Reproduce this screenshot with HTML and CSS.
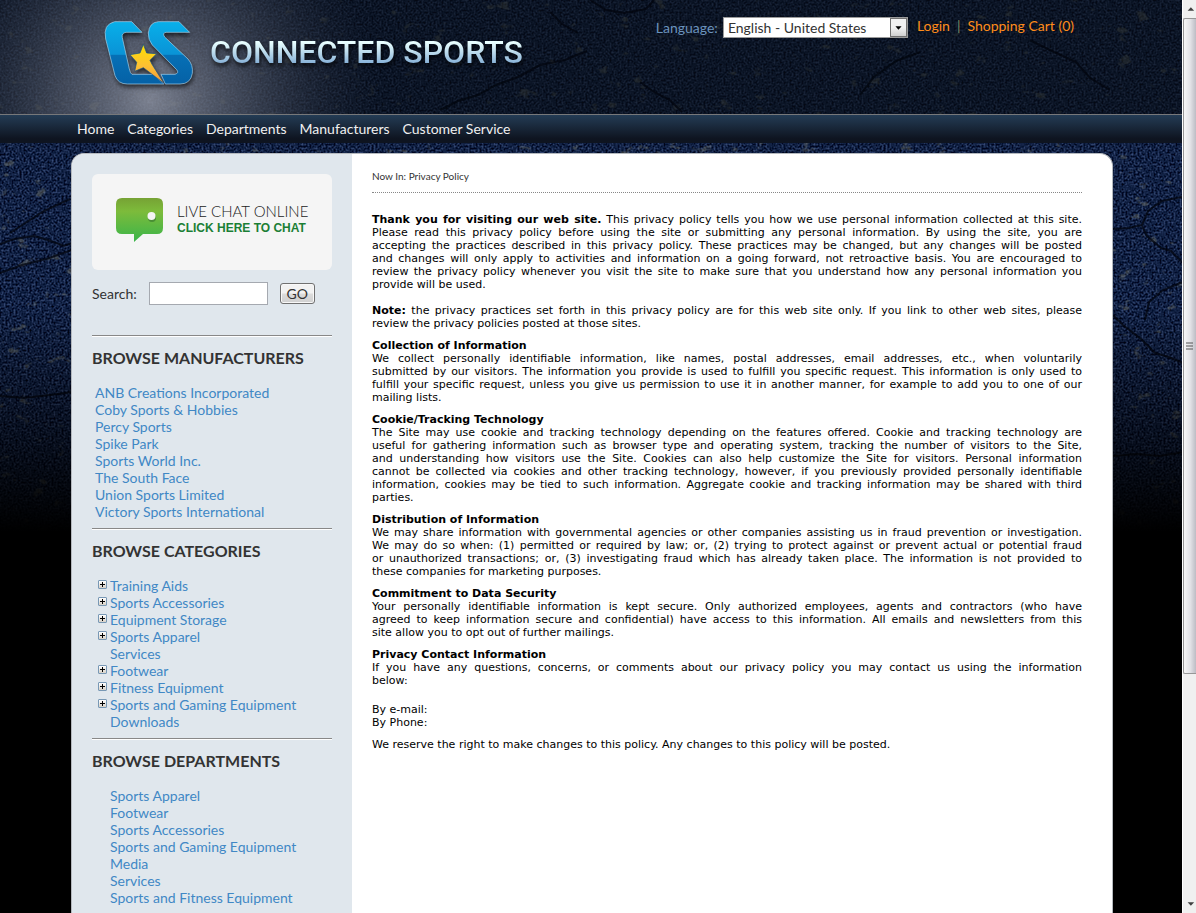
FILE: index.html
```html
<!DOCTYPE html>
<html lang="en">
<head>
    <meta charset="UTF-8">
    <meta name="viewport" content="width=device-width, initial-scale=1.0">
    <title>Privacy Policy - Connected Sports</title>
    <link rel="stylesheet" href="styles.css">
</head>
<body>
    <div class="page">
        <!-- asphalt texture behind everything -->
        <svg class="texture" aria-hidden="true" width="100%" height="560">
            <defs>
                <filter id="grain" x="0" y="0" width="100%" height="100%" color-interpolation-filters="sRGB">
                    <feTurbulence type="fractalNoise" baseFrequency="0.5" numOctaves="3" seed="4"/>
                    <feColorMatrix values="0.6 0 0 0 -0.23  0.65 0 0 0 -0.19  0.8 0 0 0 -0.13  0 0 0 0 1"/>
                </filter>
                <filter id="patches" x="0" y="0" width="100%" height="100%" color-interpolation-filters="sRGB">
                    <feTurbulence type="fractalNoise" baseFrequency="0.06 0.09" numOctaves="3" seed="11"/>
                    <feColorMatrix values="0 0 0 0 0.5  0 0 0 0 0.5  0 0 0 0 0.42  0 9 0 0 -6.2"/>
                </filter>
                <linearGradient id="fade" x1="0" y1="0" x2="0" y2="1">
                    <stop offset="0.55" stop-color="#000" stop-opacity="0"/>
                    <stop offset="0.8" stop-color="#000" stop-opacity="0.6"/>
                    <stop offset="0.95" stop-color="#000"/>
                </linearGradient>
                <radialGradient id="spot" gradientUnits="userSpaceOnUse" cx="150" cy="100" r="230">
                    <stop offset="0" stop-color="#b0b4c2" stop-opacity="0.68"/>
                    <stop offset="0.4" stop-color="#858b9b" stop-opacity="0.42"/>
                    <stop offset="1" stop-color="#3a4152" stop-opacity="0"/>
                </radialGradient>
            </defs>
            <rect width="100%" height="560" fill="#0d1b3c"/>
            <rect width="100%" height="560" filter="url(#grain)" opacity="0.85"/>
            <rect width="100%" height="560" filter="url(#patches)" opacity="0.4"/>
            <rect width="100%" height="114" fill="#080d12" opacity="0.6"/>
            <rect width="100%" height="114" fill="url(#spot)"/>
            <g class="cracks">
                <path d="M440 110l18-9 20-6 18-10 22-8 22-12 25-5 22-9"/>
                <path d="M550 12l12 12 16 9M590 0l16 10 18 3 22-4 8-9"/>
                <path d="M640 82l14 10 16 8 12 12M860 95l14-18 22-16 24-9"/>
                <path d="M1030 40l24 12 22 10 14 16 20 12"/>
                <path d="M0 244l14-5 20-3 14 4 16 6 8-3M0 273l22-8 24-6 26-9"/>
                <path d="M0 396l24 2 26-3 22-3M10 233l34-22 26-12"/>
                <path d="M1113 229l16-1 13-3 6-14 14-10 20-4"/>
                <path d="M1142 226l5 10 14 12 10 3 12 12"/>
                <path d="M1113 315l10 10 18 14 14 14 14 4 14 6M1145 320l4-18 14-12 20-8"/>
                <path d="M1113 456l24-2 22 2 24-4"/>
            </g>
            <rect width="100%" height="560" fill="url(#fade)"/>
        </svg>

        <header class="header">
            <div class="container header-row">
                <a href="#" class="logo">
                    <svg class="logo-mark" viewBox="36 56 282 216" aria-hidden="true">
                        <defs>
                            <linearGradient id="blue" gradientUnits="userSpaceOnUse" x1="0" y1="63" x2="0" y2="250">
                                <stop offset="0" stop-color="#08b0ea"/>
                                <stop offset="0.53" stop-color="#0a93d6"/>
                                <stop offset="0.54" stop-color="#0670b6"/>
                                <stop offset="1" stop-color="#0561a6"/>
                            </linearGradient>
                            <linearGradient id="gold" x1="0" y1="0" x2="0" y2="1">
                                <stop offset="0" stop-color="#ffe100"/>
                                <stop offset="0.55" stop-color="#fdc033"/>
                                <stop offset="1" stop-color="#f39a3b"/>
                            </linearGradient>
                        </defs>
                        <g fill="url(#blue)" stroke="#a9d4ee" stroke-width="2">
                            <path d="M74 64H125L156 96H108Q94 98 97 112L118 206Q121 220 126 222H190L222 251H112Q84 251 75 226L47 116Q38 72 74 64Z"/>
                            <path d="M205 64H267L299 96H228Q216 98 224 110L294 176Q310 194 307 219Q302 251 270 251H226L213 222H255Q268 218 260 208L187 134Q174 118 175 98Q178 66 205 64Z"/>
                        </g>
                        <path fill="url(#gold)" stroke="#11508a" stroke-width="2" d="M160 132L170 158L200 160L180 180L186 192L222 249L160 202L134 213L140 186L120 163L150 158Z"/>
                    </svg>
                    <span class="logo-text">CONNECTED SPORTS</span>
                </a>
                <div class="tools">
                    <label for="language">Language:</label>
                    <div class="select-box">
                        <select id="language">
                            <option>English - United States</option>
                        </select>
                        <svg class="select-arrow" viewBox="0 0 17 19" aria-hidden="true"><path d="M5 8h7l-3.5 4z"/></svg>
                    </div>
                    <div class="account">
                        <a href="#">Login</a>
                        <span class="divider">|</span>
                        <a href="#">Shopping Cart (0)</a>
                    </div>
                </div>
            </div>
        </header>

        <nav class="nav">
            <div class="container nav-row">
                <a href="#">Home</a>
                <a href="#">Categories</a>
                <a href="#">Departments</a>
                <a href="#">Manufacturers</a>
                <a href="#">Customer Service</a>
            </div>
        </nav>

        <div class="container wrapper">
            <aside class="sidebar">
                <a href="#" class="chat">
                    <svg class="chat-icon" width="48" height="44" viewBox="0 0 48 44" aria-hidden="true">
                        <defs>
                            <linearGradient id="green" x1="0" y1="0" x2="0" y2="1">
                                <stop offset="0" stop-color="#76a234"/>
                                <stop offset="0.3" stop-color="#7dbb3b"/>
                                <stop offset="1" stop-color="#39b54a"/>
                            </linearGradient>
                        </defs>
                        <path fill="url(#green)" d="M6 0H41Q47 0 47 6V30Q47 36 41 36H27L18 44V36H6Q0 36 0 30V6Q0 0 6 0Z"/>
                        <circle cx="36" cy="20" r="4" fill="#4a8f35"/>
                        <circle cx="35.500" cy="18" r="4" fill="#f4f4f4"/>
                    </svg>
                    <span class="chat-text">
                        <span class="chat-title">LIVE CHAT ONLINE</span>
                        <strong>CLICK HERE TO CHAT</strong>
                    </span>
                </a>
                <form class="search">
                    <label for="search">Search:</label>
                    <input type="text" id="search">
                    <button type="button">GO</button>
                </form>

                <section class="block">
                    <h2>BROWSE MANUFACTURERS</h2>
                    <ul class="links">
                        <li><a href="#">ANB Creations Incorporated</a></li>
                        <li><a href="#">Coby Sports &amp; Hobbies</a></li>
                        <li><a href="#">Percy Sports</a></li>
                        <li><a href="#">Spike Park</a></li>
                        <li><a href="#">Sports World Inc.</a></li>
                        <li><a href="#">The South Face</a></li>
                        <li><a href="#">Union Sports Limited</a></li>
                        <li><a href="#">Victory Sports International</a></li>
                    </ul>
                </section>

                <section class="block">
                    <h2>BROWSE CATEGORIES</h2>
                    <ul class="links tree">
                        <li class="expand"><a href="#">Training Aids</a></li>
                        <li class="expand"><a href="#">Sports Accessories</a></li>
                        <li class="expand"><a href="#">Equipment Storage</a></li>
                        <li class="expand"><a href="#">Sports Apparel</a></li>
                        <li><a href="#">Services</a></li>
                        <li class="expand"><a href="#">Footwear</a></li>
                        <li class="expand"><a href="#">Fitness Equipment</a></li>
                        <li class="expand"><a href="#">Sports and Gaming Equipment</a></li>
                        <li><a href="#">Downloads</a></li>
                    </ul>
                </section>

                <section class="block">
                    <h2>BROWSE DEPARTMENTS</h2>
                    <ul class="links tree">
                        <li><a href="#">Sports Apparel</a></li>
                        <li><a href="#">Footwear</a></li>
                        <li><a href="#">Sports Accessories</a></li>
                        <li><a href="#">Sports and Gaming Equipment</a></li>
                        <li><a href="#">Media</a></li>
                        <li><a href="#">Services</a></li>
                        <li><a href="#">Sports and Fitness Equipment</a></li>
                    </ul>
                </section>
            </aside>

            <main class="content">
                <div class="breadcrumb">Now In: <a href="#">Privacy Policy</a></div>
                <div class="policy">
                    <p class="intro"><b>Thank you for visiting our web site.</b> This privacy policy tells you how we use personal information collected at this site.<br>
                    Please read this privacy policy before using the site or submitting any personal information. By using the site, you are<br>
                    accepting the practices described in this privacy policy. These practices may be changed, but any changes will be posted<br>
                    and changes will only apply to activities and information on a going forward, not retroactive basis. You are encouraged to<br>
                    review the privacy policy whenever you visit the site to make sure that you understand how any personal information you
                    <span class="last">provide will be used.</span></p>
                    <p><b>Note:</b> the privacy practices set forth in this privacy policy are for this web site only. If you link to other web sites, please
                    <span class="last">review the privacy policies posted at those sites.</span></p>
                    <h3>Collection of Information</h3>
                    <p>We collect personally identifiable information, like names, postal addresses, email addresses, etc., when voluntarily<br>
                    submitted by our visitors. The information you provide is used to fulfill you specific request. This information is only used to<br>
                    fulfill your specific request, unless you give us permission to use it in another manner, for example to add you to one of our
                    <span class="last">mailing lists.</span></p>
                    <h3>Cookie/Tracking Technology</h3>
                    <p>The Site may use cookie and tracking technology depending on the features offered. Cookie and tracking technology are<br>
                    useful for gathering information such as browser type and operating system, tracking the number of visitors to the Site,<br>
                    and understanding how visitors use the Site. Cookies can also help customize the Site for visitors. Personal information<br>
                    cannot be collected via cookies and other tracking technology, however, if you previously provided personally identifiable<br>
                    information, cookies may be tied to such information. Aggregate cookie and tracking information may be shared with third
                    <span class="last">parties.</span></p>
                    <h3>Distribution of Information</h3>
                    <p>We may share information with governmental agencies or other companies assisting us in fraud prevention or investigation.<br>
                    We may do so when: (1) permitted or required by law; or, (2) trying to protect against or prevent actual or potential fraud<br>
                    or unauthorized transactions; or, (3) investigating fraud which has already taken place. The information is not provided to
                    <span class="last">these companies for marketing purposes.</span></p>
                    <h3>Commitment to Data Security</h3>
                    <p>Your personally identifiable information is kept secure. Only authorized employees, agents and contractors (who have<br>
                    agreed to keep information secure and confidential) have access to this information. All emails and newsletters from this
                    <span class="last">site allow you to opt out of further mailings.</span></p>
                    <h3>Privacy Contact Information</h3>
                    <p class="contact">If you have any questions, concerns, or comments about our privacy policy you may contact us using the information
                    <span class="last">below:</span></p>
                    <p><span class="last">By e-mail:</span><span class="last">By Phone:</span></p>
                    <p><span class="last">We reserve the right to make changes to this policy. Any changes to this policy will be posted.</span></p>
                </div>
            </main>
        </div>
    </div>

    <div class="scrollbar" aria-hidden="true">
        <svg class="scroll-arrow" viewBox="0 0 14 18"><path d="M5 11h7L8.500 7z"/></svg>
        <div class="thumb">
            <svg class="grip" viewBox="0 0 8 8"><path d="M0 1h7M0 4h7M0 7h7"/></svg>
        </div>
        <div class="track"></div>
        <svg class="scroll-arrow" viewBox="0 0 14 18"><path d="M5 7h7l-3.500 4z"/></svg>
    </div>
</body>
</html>
```

FILE: styles.css
```css
*, *::before {
    box-sizing: border-box;
}
body, html {
    margin: 0;
    padding: 0;
    height: 100%;
}
body {
    display: flex;
    overflow: hidden;
    background: #000;
    color: #333;
    font-family: Lato, sans-serif;
    font-size: 14px;
    line-height: 17px;
}
a {
    text-decoration: none;
}
.page {
    flex: 1;
    min-width: 0;
    position: relative;
    display: flex;
    flex-direction: column;
    overflow: hidden;
}
.texture {
    position: absolute;
    top: 0;
    left: 0;
    z-index: -1;
}
.cracks {
    fill: none;
    stroke: #02050e;
    stroke-width: 2;
    opacity: 0.75;
}
.container {
    margin: 0 69px 0 71px;
}

/* header */
.header {
    flex: none;
    height: 114px;
}
.header-row {
    display: flex;
    justify-content: space-between;
    align-items: flex-start;
    padding: 17px 39px 0 31px;
}
.logo {
    display: flex;
    align-items: flex-start;
    gap: 14px;
    padding-top: 2px;
}
.logo-mark {
    width: 94px;
    height: 72px;
    overflow: visible;
    filter: drop-shadow(1px 3px 2px rgba(0, 0, 0, 0.6));
}
.logo-text {
    padding-top: 14px;
    font-family: Roboto, sans-serif;
    font-size: 32px;
    font-weight: 500;
    line-height: 38px;
    white-space: nowrap;
    color: transparent;
    background: linear-gradient(#e9ffff 45%, #88b2d8 85%);
    -webkit-background-clip: text;
    background-clip: text;
    filter: drop-shadow(1px 3px 2px rgba(0, 0, 0, 0.8));
}
.tools {
    display: flex;
    color: #6b93bd;
}
.tools label {
    padding: 2px 5px 0 0;
}
.select-box {
    position: relative;
    width: 185px;
    height: 21px;
}
.select-box select {
    appearance: none;
    width: 100%;
    height: 100%;
    padding: 0 4px;
    border: 1px solid #9a9a9a;
    border-radius: 0;
    background: #fff;
    color: #333;
    font: 14px/19px Lato, sans-serif;
}
.select-arrow {
    position: absolute;
    top: 1px;
    right: 1px;
    width: 17px;
    height: 19px;
    border: 1px solid #707070;
    background: linear-gradient(#f2f2f2 50%, #cfcfcf);
    pointer-events: none;
}
.account {
    display: flex;
    gap: 7px;
    padding-left: 9px;
}
.account a {
    color: #ff8c1a;
}
.divider {
    color: #7f8a66;
}

/* navigation */
.nav {
    flex: none;
    height: 29px;
    border-top: 1px solid #77787a;
    background: linear-gradient(#243c55, #0e1420 85%);
}
.nav-row {
    display: flex;
    gap: 13px;
    padding: 5px 6px;
}
.nav a {
    color: #f0f0f0;
}

/* page body */
.wrapper {
    flex: 1 0 auto;
    display: flex;
    margin-top: 10px;
    border: 1px solid #b5b9be;
    border-bottom: 0;
    border-radius: 13px 13px 0 0;
    background: #fff;
    overflow: hidden;
}
.sidebar {
    flex: none;
    width: 280px;
    padding: 20px;
    background: #e0e7ed;
}
.chat {
    display: flex;
    align-items: center;
    gap: 13px;
    height: 96px;
    padding: 0 24px 4px;
    border-radius: 6px;
    background: #f5f5f5;
}
.chat-icon {
    flex: none;
}
.chat-text {
    display: flex;
    flex-direction: column;
    padding-bottom: 2px;
    white-space: nowrap;
    color: #222;
}
.chat-title {
    font-size: 15px;
    font-weight: 300;
}
.chat-text strong {
    font: bold 12px/16px "Liberation Sans", sans-serif;
    color: #1b7f35;
}
.search {
    display: flex;
    align-items: center;
    gap: 12px;
    padding: 12px 0 30px;
}
.search input {
    width: 119px;
    height: 23px;
    border: 1px solid #a5a9b0;
    background: #fff;
}
.search button {
    width: 35px;
    height: 21px;
    padding: 0;
    border: 1px solid #707070;
    border-radius: 3px;
    background: linear-gradient(#f2f2f2 48%, #dcdcdc 52%, #d0d0d0);
    box-shadow: inset 0 0 0 1px #f8f8f8;
    color: #333;
    font: 14px/17px Lato, sans-serif;
}
.block {
    border-top: 1px solid #888;
    box-shadow: inset 0 1px 0 #fff;
    padding-bottom: 8px;
}
.block h2 {
    margin: 0;
    padding: 13px 0 17px;
    font-size: 16px;
    font-weight: bold;
    line-height: 18px;
}
.links {
    margin: 0;
    padding: 0 0 0 3px;
    list-style: none;
}
.links a {
    color: #4188c5;
}
.tree {
    padding-left: 6px;
}
.tree li {
    display: flex;
    padding-left: 12px;
}
.tree .expand {
    gap: 3px;
    padding-left: 0;
}
.expand::before {
    content: "";
    width: 9px;
    height: 9px;
    margin-top: 3px;
    border: 1px solid #7898b5;
    border-radius: 1px;
    background:
        linear-gradient(#000, #000) center / 5px 1px no-repeat,
        linear-gradient(#000, #000) center / 1px 5px no-repeat,
        linear-gradient(#fff, #d8d2c8);
}

/* article */
.content {
    flex: 1;
    min-width: 0;
    padding: 14px 30px 0 20px;
}
.breadcrumb {
    padding-bottom: 7px;
    border-bottom: 1px dotted #888;
    font-size: 10px;
}
.breadcrumb a {
    color: #333;
}
.policy {
    padding-top: 20px;
    color: #000;
    font-family: Verdana, "DejaVu Sans", sans-serif;
    font-size: 11px;
    line-height: 13px;
    text-align: justify;
}
.policy p {
    margin: 0 0 9px;
    text-align-last: justify;
}
.policy .last {
    display: block;
    text-align-last: left;
}
.policy h3 {
    margin: 0;
    font-size: 11px;
    font-weight: bold;
}
.policy .intro {
    margin-bottom: 13px;
}
.policy .contact {
    margin-bottom: 16px;
}

/* scrollbar */
.scrollbar {
    flex: none;
    width: 14px;
    display: flex;
    flex-direction: column;
    border-left: 1px solid #fff;
    background: #f0f0f0;
}
.scroll-arrow {
    flex: none;
    height: 18px;
    fill: #404040;
}
.thumb {
    flex: 655;
    display: flex;
    align-items: center;
    justify-content: center;
    border: 1px solid #979797;
    border-right: 0;
    border-radius: 2px 0 0 2px;
    background: linear-gradient(90deg, #f7f7f7, #e4e4e8 50%, #bcbcc4);
}
.grip {
    width: 8px;
    height: 8px;
    stroke: #555;
}
.track {
    flex: 222;
}
```
